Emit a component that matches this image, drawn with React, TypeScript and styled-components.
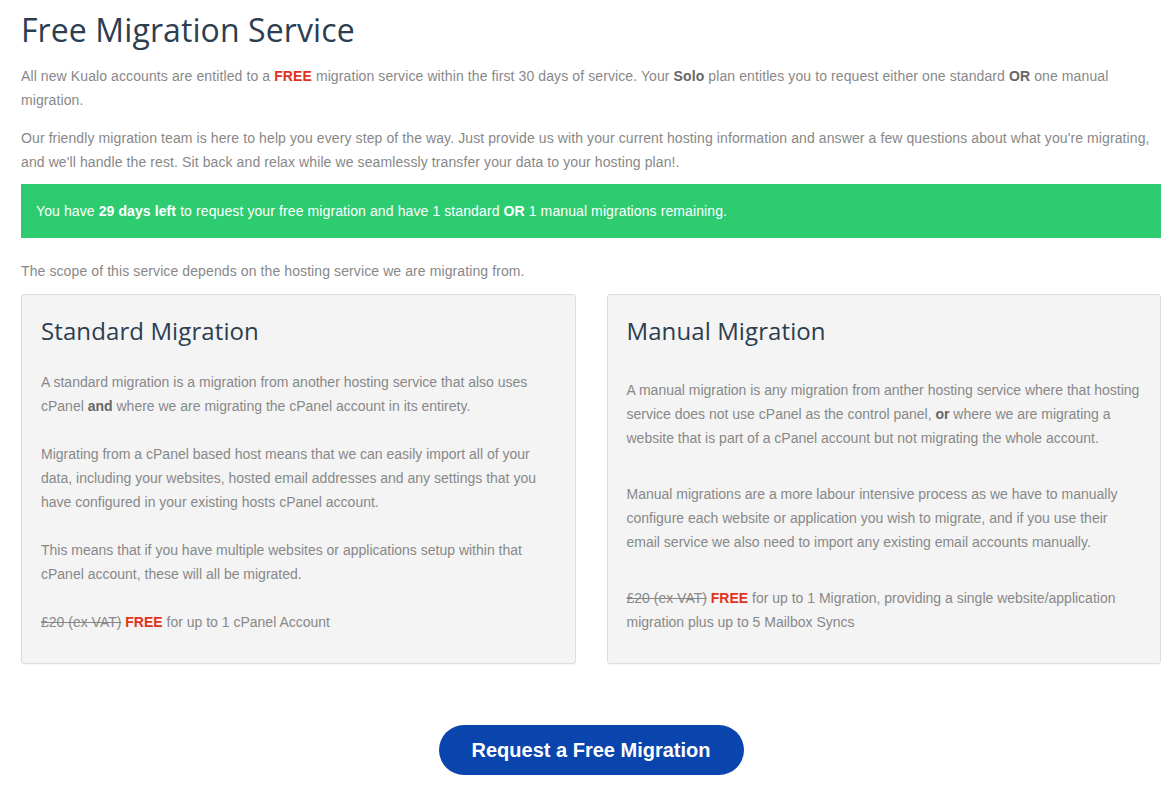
import React from "react";
import styled, { createGlobalStyle } from "styled-components";

const GlobalStyle = createGlobalStyle`
  html, body { margin: 0; padding: 0; background: #ffffff; }
  body { font-family: "Liberation Sans", Arial, Helvetica, sans-serif; }
`;

const Page = styled.main`
  width: 1140px;
  display: flex;
  flex-direction: column;
  padding: 10px 0 19px 21px;
  color: #888888;
  font-size: 14px;
  line-height: 24px;
  letter-spacing: 0.1px;
`;

const Title = styled.h1`
  margin: 0 0 14px;
  font-family: "Open Sans", "Noto Sans", sans-serif;
  font-weight: 400;
  font-size: 32px;
  line-height: 40px;
  color: #2c3e50;
  letter-spacing: 0.1px;
`;

const Intro = styled.div`
  display: flex;
  flex-direction: column;
  gap: 14px;
`;

const Para = styled.p`
  margin: 0;
`;

const Strong = styled.strong<{ $red?: boolean }>`
  font-weight: 700;
  color: ${(p) => (p.$red ? "#e2321c" : "#666666")};
`;

const Notice = styled.div`
  margin-top: 10px;
  height: 54px;
  display: flex;
  align-items: center;
  padding: 0 15px;
  background: #2ecc71;
  color: #ffffff;
  b { font-weight: 700; }
`;

const Scope = styled.p`
  margin: 21px 0 0;
`;

const Cards = styled.section`
  display: grid;
  grid-template-columns: 1fr 1fr;
  column-gap: 31px;
  margin-top: 11px;
`;

const Card = styled.article`
  background: #f4f4f4;
  border: 1px solid #dddddd;
  border-radius: 3px;
  box-shadow: 0 1px 2px rgba(0, 0, 0, 0.04);
  padding: 18px 19px 29px;
`;

const CardTitle = styled.h2`
  margin: 0;
  font-family: "Open Sans", "Noto Sans", sans-serif;
  font-weight: 400;
  font-size: 24px;
  line-height: 36px;
  color: #2c3e50;
  letter-spacing: 0.1px;
`;

const CardBody = styled.div<{ $gap: number; $top: number }>`
  margin-top: ${(p) => p.$top}px;
  display: flex;
  flex-direction: column;
  gap: ${(p) => p.$gap}px;
  letter-spacing: 0;
  p { margin: 0; }
`;

const Old = styled.s`
  color: #888888;
`;

const Footer = styled.div`
  display: flex;
  justify-content: center;
  margin-top: 61px;
`;

const Button = styled.button`
  width: 305px;
  height: 50px;
  border: none;
  border-radius: 25px;
  background: #0a44ad;
  color: #ffffff;
  font-family: "Liberation Sans", Arial, sans-serif;
  font-weight: 700;
  font-size: 20px;
  cursor: pointer;
`;

export default function App() {
  return (
    <>
      <GlobalStyle />
      <Page>
        <Title>Free Migration Service</Title>
        <Intro>
          <Para>
            All new Kualo accounts are entitled to a <Strong $red>FREE</Strong> migration service within the first 30
            days of service. Your <Strong>Solo</Strong> plan entitles you to request either one standard{" "}
            <Strong>OR</Strong> one manual migration.
          </Para>
          <Para>
            Our friendly migration team is here to help you every step of the way. Just provide us with your current
            hosting information and answer a few questions about what you're migrating, and we'll handle the rest. Sit
            back and relax while we seamlessly transfer your data to your hosting plan!.
          </Para>
        </Intro>
        <Notice>
          <span>
            You have <b>29 days left</b> to request your free migration and have 1 standard <b>OR</b> 1 manual
            migrations remaining.
          </span>
        </Notice>
        <Scope>The scope of this service depends on the hosting service we are migrating from.</Scope>
        <Cards>
          <Card>
            <CardTitle>Standard Migration</CardTitle>
            <CardBody $top={21} $gap={24}>
              <p>
                A standard migration is a migration from another hosting service that also uses cPanel{" "}
                <Strong>and</Strong> where we are migrating the cPanel account in its entirety.
              </p>
              <p>
                Migrating from a cPanel based host means that we can easily import all of your data, including your
                websites, hosted email addresses and any settings that you have configured in your existing hosts
                cPanel account.
              </p>
              <p>
                This means that if you have multiple websites or applications setup within that cPanel account, these
                will all be migrated.
              </p>
              <p>
                <Old>£20 (ex VAT)</Old> <Strong $red>FREE</Strong> for up to 1 cPanel Account
              </p>
            </CardBody>
          </Card>
          <Card>
            <CardTitle>Manual Migration</CardTitle>
            <CardBody $top={29} $gap={32}>
              <p>
                A manual migration is any migration from anther hosting service where that hosting service does not
                use cPanel as the control panel, <Strong>or</Strong> where we are migrating a website that is part of
                a cPanel account but not migrating the whole account.
              </p>
              <p>
                Manual migrations are a more labour intensive process as we have to manually configure each website or
                application you wish to migrate, and if you use their email service we also need to import any
                existing email accounts manually.
              </p>
              <p>
                <Old>£20 (ex VAT)</Old> <Strong $red>FREE</Strong> for up to 1 Migration, providing a single
                website/application migration plus up to 5 Mailbox Syncs
              </p>
            </CardBody>
          </Card>
        </Cards>
        <Footer>
          <Button type="button">Request a Free Migration</Button>
        </Footer>
      </Page>
    </>
  );
}
